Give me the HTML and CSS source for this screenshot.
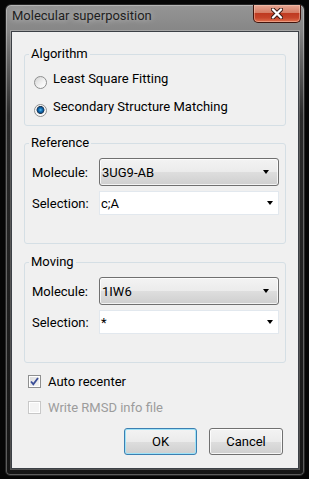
FILE: index.html
```html
<!DOCTYPE html>
<html lang="en">
<head>
    <meta charset="UTF-8">
    <title>Molecular superposition</title>
    <link rel="stylesheet" href="styles.css">
</head>
<body>
    <div class="window">
        <div class="titlebar">
            <span class="title">Molecular superposition</span>
            <div class="close-btn">
                <svg width="12" height="11" viewBox="0 0 12 11">
                    <path d="M2 1.5 L10 9.5 M10 1.5 L2 9.5" stroke="#3a1a14" stroke-width="4.2" stroke-linecap="round"/>
                    <path d="M2 1.5 L10 9.5 M10 1.5 L2 9.5" stroke="#fff" stroke-width="2.4" stroke-linecap="round"/>
                </svg>
            </div>
        </div>

        <div class="client">
            <fieldset class="group group-algo">
                <legend>Algorithm</legend>
                <div class="radio-row">
                    <span class="radio"></span>
                    <span>Least Square Fitting</span>
                </div>
                <div class="radio-row">
                    <span class="radio checked"></span>
                    <span>Secondary Structure Matching</span>
                </div>
            </fieldset>

            <fieldset class="group group-mol">
                <legend>Reference</legend>
                <div class="field-row">
                    <span class="field-label">Molecule:</span>
                    <div class="combo combo-list"><span>3UG9-AB</span><span class="arrow"></span></div>
                </div>
                <div class="field-row">
                    <span class="field-label">Selection:</span>
                    <div class="combo combo-edit"><span>c;A</span><span class="arrow"></span></div>
                </div>
            </fieldset>

            <fieldset class="group group-mol group-moving">
                <legend>Moving</legend>
                <div class="field-row">
                    <span class="field-label">Molecule:</span>
                    <div class="combo combo-list"><span>1IW6</span><span class="arrow"></span></div>
                </div>
                <div class="field-row">
                    <span class="field-label">Selection:</span>
                    <div class="combo combo-edit"><span>*</span><span class="arrow"></span></div>
                </div>
            </fieldset>

            <div class="checks">
                <div class="check-row">
                    <span class="checkbox">
                        <svg width="11" height="11" viewBox="0 0 11 11">
                            <path d="M2 5.5 L4.3 8.2 L9 2" fill="none" stroke="#3b4f98" stroke-width="1.8"/>
                        </svg>
                    </span>
                    <span>Auto recenter</span>
                </div>
                <div class="check-row disabled">
                    <span class="checkbox"></span>
                    <span>Write RMSD info file</span>
                </div>
            </div>

            <div class="buttons">
                <button class="btn btn-ok">OK</button>
                <button class="btn btn-cancel">Cancel</button>
            </div>
        </div>
    </div>
</body>
</html>
```

FILE: styles.css
```css
* {
    box-sizing: border-box;
}

body {
    margin: 0;
    background-color: #060606;
    font-family: Roboto, "Noto Sans", sans-serif;
    font-size: 13px;
    color: #000;
}

.window {
    width: 300px;
    height: 472px;
    margin: 4px 0 0 5px;
    padding: 0 5px 6px;
    border: 1px solid #262626;
    border-radius: 6px 6px 5px 5px;
    background: linear-gradient(#959595 0, #868686 26px, #6a6a6a 50px, #2a2a2a 110px, #161616 100%);
    box-shadow: inset 0 0 0 1px rgba(255, 255, 255, 0.3);
}

.titlebar {
    height: 26px;
    display: flex;
    justify-content: space-between;
    align-items: flex-start;
    padding-left: 1px;
}

.title {
    margin-top: 3px;
    line-height: 16px;
    color: #1e1e1e;
    text-shadow: 0 0 6px rgba(255, 255, 255, 0.5);
}

.close-btn {
    width: 48px;
    height: 18px;
    margin-right: -2px;
    display: flex;
    align-items: center;
    justify-content: center;
    border: 1px solid #40140c;
    border-top: none;
    border-radius: 0 0 5px 5px;
    background: linear-gradient(#e7a793 0, #d67e66 45%, #bf3a20 50%, #c6452a 75%, #e0714f 100%);
    box-shadow: inset 0 0 0 1px rgba(255, 210, 190, 0.45);
}

.client {
    height: 438px;
    padding-top: 14px;
    background-color: #f0f0f0;
    border: 1px solid #3c4046;
    box-shadow: 0 0 0 1px rgba(255, 255, 255, 0.25);
}

/* group boxes: horizontal padding lives on the rows so the legend stays at the edge */
.group {
    margin: 0 12px;
    padding-left: 0;
    padding-right: 6px;
    border: 1px solid #d5dfe5;
    border-radius: 3px;
    min-width: 0;
}

.group legend {
    margin-left: 4px;
    padding: 0 2px;
    line-height: 16px;
}

.group-algo {
    padding-top: 9px;
    padding-bottom: 8px;
}

.group-mol {
    margin-top: 9px;
    padding-top: 7px;
    padding-bottom: 28px;
}

.group-moving {
    margin-top: 10px;
}

.radio-row {
    display: flex;
    align-items: flex-start;
    padding-left: 9px;
    line-height: 16px;
}

.radio-row + .radio-row {
    margin-top: 10px;
}

.radio {
    flex: none;
    width: 13px;
    height: 13px;
    margin: 5px 6px 0 0;
    border: 1px solid #8e8f8f;
    border-radius: 50%;
    background: linear-gradient(135deg, #d2d2d2, #f4f4f4 60%, #fff);
}

.radio.checked {
    background: radial-gradient(circle at 50% 45%, #5fc2f2 0, #1778bd 1.5px, #0c4a86 3px, #28384a 3.6px, #f2f2f2 4.3px, #fff 6px);
}

.field-row {
    display: flex;
    align-items: center;
    padding-left: 7px;
}

.field-row + .field-row {
    margin-top: 5px;
}

.field-label {
    width: 67px;
    flex: none;
}

.combo {
    flex: 1;
    display: flex;
    align-items: center;
    justify-content: space-between;
}

.combo-list {
    height: 28px;
    padding: 0 9px 0 2px;
    border: 1px solid #707070;
    border-radius: 3px;
    background: linear-gradient(#f3f3f3, #ebebeb 50%, #dedede 50%, #cfcfcf);
    box-shadow: inset 0 0 0 1px rgba(255, 255, 255, 0.75);
}

.combo-edit {
    height: 24px;
    padding: 0 5px 0 1px;
    border: 1px solid #e2e8ee;
    background-color: #fff;
}

.arrow {
    width: 0;
    height: 0;
    border-left: 3.5px solid transparent;
    border-right: 3.5px solid transparent;
    border-top: 4px solid #000;
}

.checks {
    margin-top: 9px;
    padding-left: 16px;
}

.check-row {
    height: 18px;
    display: flex;
    align-items: center;
}

.check-row + .check-row {
    margin-top: 8px;
}

.checkbox {
    flex: none;
    width: 13px;
    height: 13px;
    margin-right: 7px;
    display: flex;
    align-items: center;
    justify-content: center;
    border: 1px solid #8e8f8f;
    background: linear-gradient(135deg, #dcdcdc, #f8f8f8);
    box-shadow: inset 0 0 0 1px #fff;
}

.check-row.disabled {
    color: #9c9c9c;
}

.check-row.disabled .checkbox {
    border-color: #c8c8c8;
    background: #f4f4f4;
}

.buttons {
    margin-top: 12px;
    padding-right: 15px;
    display: flex;
    justify-content: flex-end;
    gap: 12px;
}

.btn {
    height: 27px;
    padding: 0;
    font: inherit;
    color: #000;
    border: 1px solid #707070;
    border-radius: 3px;
    background: linear-gradient(#f3f3f3, #ebebeb 50%, #dedede 50%, #cfcfcf);
    box-shadow: inset 0 0 0 1px rgba(255, 255, 255, 0.8);
}

.btn-ok {
    width: 73px;
    border-color: #3c7fb1;
    box-shadow: inset 0 0 0 1px #9ee3f8;
}

.btn-cancel {
    width: 74px;
}
```
